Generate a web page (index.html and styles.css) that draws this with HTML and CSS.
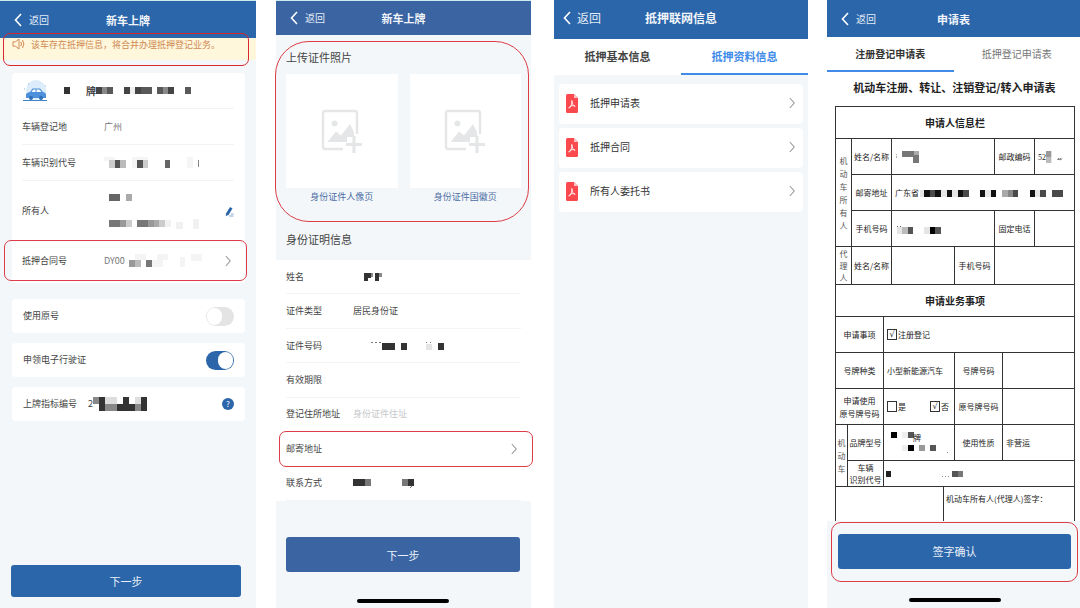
FILE: index.html
```html
<!DOCTYPE html>
<html lang="zh-CN">
<head>
<meta charset="utf-8">
<meta name="viewport" content="width=device-width, initial-scale=1">
<title>新车上牌</title>
<link rel="stylesheet" href="styles.css">
</head>
<body>
<svg class="defs" aria-hidden="true">
  <symbol id="back" viewBox="0 0 8 14"><path d="M7 1 1.5 7 7 13" fill="none" stroke="currentColor" stroke-width="1.6"/></symbol>
  <symbol id="next" viewBox="0 0 6 12"><path d="M.8 1 5.2 6 .8 11" fill="none" stroke="currentColor" stroke-width="1.1"/></symbol>
  <symbol id="photo" viewBox="0 0 42 44">
    <path d="M22 40H4Q2 40 2 38V4Q2 2 4 2H34Q36 2 36 4V25" fill="none" stroke="currentColor" stroke-width="2.400"/>
    <circle cx="13.500" cy="14.500" r="3" fill="currentColor"/>
    <path d="M6.500 33 15 22.500 20 26.500 29 15 33 23V28H26V33Z" fill="currentColor"/>
    <path d="M33 27V44M25 35.500H41" stroke="currentColor" stroke-width="3.200"/>
  </symbol>
  <symbol id="pdf" viewBox="0 0 12 19">
    <path d="M1.500 0H8L12 4V17.500Q12 19 10.500 19H1.500Q0 19 0 17.500V1.500Q0 0 1.500 0Z" fill="#fb4a4e"/>
    <path d="M8 0V4H12Z" fill="#ffc4c5"/>
    <path d="M5.800 6.500C6.500 9.500 5 12.500 3.200 14.200C2.600 14.300 3 12.700 5 12C7 11.300 9 11.500 9.200 12.200C8.700 13.100 6.100 11 5.800 6.500Z" fill="none" stroke="#fff" stroke-width=".9"/>
  </symbol>
</svg>
<div class="board">

<section class="phone phone-plate">
  <header class="bar">
    <button class="back"><svg class="back-icon"><use href="#back"/></svg>返回</button>
    <h1>新车上牌</h1>
  </header>
  <div class="notice">
    <svg class="speaker" viewBox="0 0 13 12"><path d="M1 3.800H3.500L7 1V11L3.500 8.200H1Z M8.800 3.800Q10.300 6 8.800 8.200 M10.500 2Q13.200 6 10.500 10" fill="none" stroke="currentColor"/></svg>
    <p>该车存在抵押信息，将合并办理抵押登记业务。</p>
    <span class="mark mark-notice"></span>
  </div>
  <main class="plate-body">
    <div class="card info">
      <div class="row vehicle">
        <svg class="car" viewBox="0 0 26 22"><circle cx="14" cy="10" r="10" fill="#dcecfb"/><path d="M1 20.500H25" stroke="#3f83c9"/><path d="M4 14Q5 12.500 8 12L10.500 8.500H18L21 12Q23.500 12.500 24 14V18H4Z" fill="#4c8fda"/><path d="M9.500 12 11.300 9.500H13.500V12ZM14.500 9.500H17.300L19.500 12H14.500Z" fill="#fff"/><circle cx="9" cy="18" r="2" fill="#2f6fb5"/><circle cx="19" cy="18" r="2" fill="#2f6fb5"/><path d="M2 9H3M23 6H24M6 4H7" stroke="#8bb8e6"/></svg>
        <svg class="mosaic plate-dot" viewBox="0 0 18 21"><path fill="#333" d="M0 0h18v21h-18z"/></svg>
        <b>牌</b>
        <svg class="mosaic plate-code" viewBox="291 0 285 21"><path fill="#444" d="M291 0h18v21h-18zM375 0h17v21h-17zM408 0h18v21h-18zM508 0h17v21h-17z"/><path fill="#888" d="M309 0h16v21h-16zM491 0h17v21h-17z"/><path fill="#595959" d="M325 0h17v21h-17zM426 0h32v21h-32zM474 0h17v21h-17zM558 0h18v21h-18z"/><path fill="#eee" d="M392 0h16v21h-16z"/></svg>
      </div>
      <div class="row"><span class="label">车辆登记地</span><span class="soft">广州</span></div>
      <div class="row"><span class="label">车辆识别代号</span>
        <svg class="mosaic vin" viewBox="309 0 288 33"><path fill="#f5f5f5" d="M309 0h32v12h-32zM392 0h48v33h-48zM558 0h18v33h-18z"/><path fill="#ccc" d="M325 10h16v22h-16zM425 10h16v22h-16z"/><path fill="#555" d="M341 10h17v22h-17zM408 10h17v22h-17z"/><path fill="#bbb" d="M358 10h17v22h-17z"/><path fill="#666" d="M491 10h17v22h-17z"/><path fill="#888" d="M591 8h3v22h-3z"/></svg></div>
      <div class="row owner"><span class="label">所有人</span>
        <svg class="mosaic owner-lines" viewBox="309 0 285 105"><path fill="#666" d="M325 0h33v21h-33z"/><path fill="#aaa" d="M375 0h17v21h-17zM458 78h17v21h-17z"/><path fill="#777" d="M325 78h33v21h-33zM408 78h33v21h-33z"/><path fill="#999" d="M358 78h17v21h-17zM441 78h17v21h-17z"/><path fill="#ccc" d="M375 78h17v21h-17zM475 78h17v21h-17z"/><path fill="#f1f1f1" d="M492 78h17v21h-17zM525 85h20v20h-20zM575 75h19v30h-19z"/></svg>
        <svg class="edit" viewBox="0 0 9 11"><path d="M1 7.500 5 1 7.500 2.500 3.500 9 .8 10Z" fill="#2d65ab"/><path d="M4 10H8.500M6 8H8.500" stroke="#87a9d0"/></svg></div>
      <div class="row contract"><span class="label">抵押合同号</span><span class="soft">DY00</span>
        <svg class="mosaic contract-code" viewBox="384 0 225 42"><path fill="#f4f4f4" d="M408 0h34v18h-34zM458 18h34v22h-34zM475 0h33v18h-33zM542 10h16v30h-16zM575 0h33v21h-33z"/><path fill="#999" d="M391 18h17v21h-17z"/><path fill="#bbb" d="M408 18h17v21h-17z"/><path fill="#777" d="M441 18h17v21h-17z"/></svg>
        <svg class="next"><use href="#next"/></svg>
        <span class="mark mark-contract"></span></div>
    </div>
    <label class="card option"><span>使用原号</span><input class="switch" type="checkbox"></label>
    <label class="card option"><span>申领电子行驶证</span><input class="switch" type="checkbox" checked></label>
    <div class="card option"><span>上牌指标编号</span><span class="quota">2<svg class="mosaic quota-code" viewBox="279 0 162 42"><path fill="#888" d="M279 0h18v20h-18zM315 20h35v22h-35zM404 20h20v22h-20z"/><path fill="#333" d="M297 0h18v42h-18zM369 0h18v20h-18zM351 20h53v22h-53zM424 0h17v42h-17z"/><path fill="#ddd" d="M315 0h36v20h-36zM404 0h20v20h-20z"/></svg></span><button class="help" aria-label="帮助">?</button></div>
  </main>
  <footer class="foot foot-plate"><button class="primary">下一步</button></footer>
</section>

<section class="phone phone-identity">
  <header class="bar">
    <button class="back"><svg class="back-icon"><use href="#back"/></svg>返回</button>
    <h1>新车上牌</h1>
  </header>
  <div class="upload">
    <h2>上传证件照片</h2>
    <div class="tiles">
      <button class="tile"><span class="drop"><svg class="photo"><use href="#photo"/></svg></span>身份证件人像页</button>
      <button class="tile"><span class="drop"><svg class="photo"><use href="#photo"/></svg></span>身份证件国徽页</button>
    </div>
    <span class="mark mark-upload"></span>
  </div>
  <h2 class="section">身份证明信息</h2>
  <div class="fields">
    <div class="field"><span class="label">姓名</span><svg class="mosaic name-code" viewBox="252 0 87 24"><path fill="#333" d="M286 0h12v24h-12zM298 0h8v14h-8zM318 0h11v24h-11z"/><path fill="#888" d="M306 0h5v12h-5zM329 0h9v12h-9z"/></svg></div>
    <div class="field"><span class="label">证件类型</span><span>居民身份证</span></div>
    <div class="field"><span class="label">证件号码</span><svg class="mosaic id-code" viewBox="252 0 273 24"><path fill="#333" d="M340 3h38v21h-38zM396 3h18v21h-18zM507 3h18v21h-18z"/><path fill="#777" d="M306 0h5v3h-5zM318 0h5v3h-5zM330 0h7v3h-7zM471 0h4v3h-4zM483 0h4v3h-4z"/><path fill="#e5e5e5" d="M470 6h18v17h-18z"/></svg></div>
    <div class="field"><span class="label">有效期限</span></div>
    <div class="field"><label class="label" for="home">登记住所地址</label><input id="home" class="entry" type="text" placeholder="身份证件住址"></div>
    <div class="field"><span class="label">邮寄地址</span><svg class="next"><use href="#next"/></svg><span class="mark mark-post"></span></div>
    <div class="field"><span class="label">联系方式</span><svg class="mosaic phone-code" viewBox="249 0 183 27"><path fill="#333" d="M249 0h35v21h-35zM414 0h18v21h-18z"/><path fill="#777" d="M284 0h18v21h-18zM396 0h18v21h-18zM417 24l9-3v4l-6 2z"/></svg></div>
  </div>
  <footer class="foot foot-identity"><button class="primary">下一步</button><span class="home-bar"></span></footer>
</section>

<section class="phone phone-files">
  <header class="bar">
    <button class="back"><svg class="back-icon"><use href="#back"/></svg>返回</button>
    <h1>抵押联网信息</h1>
  </header>
  <nav class="tabs"><button class="tab">抵押基本信息</button><button class="tab active">抵押资料信息</button></nav>
  <main class="files">
    <a class="card file" href="#"><svg class="pdf"><use href="#pdf"/></svg><span>抵押申请表</span><svg class="next"><use href="#next"/></svg></a>
    <a class="card file" href="#"><svg class="pdf"><use href="#pdf"/></svg><span>抵押合同</span><svg class="next"><use href="#next"/></svg></a>
    <a class="card file" href="#"><svg class="pdf"><use href="#pdf"/></svg><span>所有人委托书</span><svg class="next"><use href="#next"/></svg></a>
  </main>
</section>

<section class="phone phone-form">
  <header class="bar">
    <button class="back"><svg class="back-icon"><use href="#back"/></svg>返回</button>
    <h1>申请表</h1>
  </header>
  <nav class="tabs"><button class="tab active">注册登记申请表</button><button class="tab">抵押登记申请表</button></nav>
  <main class="sheet">
    <h2>机动车注册、转让、注销登记/转入申请表</h2>
    <table>
      <colgroup><col class="c12"><col class="c4"><col class="c32"><col class="c8"><col class="c52"><col class="c11"><col class="c40"><col class="c8"><col class="c32"><col class="c40"></colgroup>
      <tr class="title"><th colspan="10">申请人信息栏</th></tr>
      <tr><th class="side" colspan="2" rowspan="3">机<br>动<br>车<br>所<br>有<br>人</th><th colspan="2">姓名/名称</th><td colspan="3"><svg class="mosaic form-name" viewBox="216 0 75 36"><path fill="#777" d="M237 0h36v18h-36zM271 0h17v36h-17z"/><path fill="#aaa" d="M273 0h15v12h-15zM219 8h3v4h-3zM219 16h3v4h-3z"/></svg></td><th colspan="2">邮政编码</th><td><span class="serif">52</span><svg class="zip-code" viewBox="669 0 51 36"><path fill="#999" d="M669 0h16v18h-16z"/><path fill="#bbb" d="M669 18h16v18h-16z"/><path d="M703 27l4-5v5l5-5v5l6-5" fill="none" stroke="#444" stroke-width="2"/></svg></td></tr>
      <tr><th colspan="2">邮寄地址</th><td colspan="6">广东省<svg class="mosaic form-address" viewBox="288 0 432 21"><path fill="#111" d="M304 0h17v21h-17zM337 0h17v21h-17zM371 0h16v21h-16zM404 0h16v21h-16zM471 0h16v21h-16zM504 0h16v21h-16zM620 0h16v21h-16z"/><path fill="#4a4a4a" d="M321 0h16v21h-16zM420 0h17v21h-17zM570 0h16v21h-16zM652 0h17v21h-17zM686 0h34v21h-34z"/><path fill="#aaa" d="M537 0h17v21h-17z"/><path fill="#888" d="M554 0h16v21h-16z"/><path fill="#e6e6e6" d="M290 0h14v21h-14zM354 0h17v21h-17zM387 0h17v21h-17zM487 0h17v21h-17zM636 0h16v21h-16z"/></svg></td></tr>
      <tr><th colspan="2">手机号码</th><td colspan="3"><svg class="mosaic form-mobile" viewBox="216 0 138 24"><path fill="#e5e5e5" d="M221 3h17v21h-17zM304 3h16v21h-16z"/><path fill="#bbb" d="M238 3h16v21h-16z"/><path fill="#555" d="M254 3h17v21h-17zM337 3h17v21h-17zM221 0h4v2h-4zM231 0h4v2h-4z"/><path fill="#000" d="M320 3h17v21h-17z"/></svg></td><th colspan="2">固定电话</th><td></td></tr>
      <tr class="agent"><th class="side" colspan="2">代<br>理<br>人</th><th colspan="2">姓名/名称</th><td colspan="2"></td><th>手机号码</th><td colspan="3"></td></tr>
      <tr class="title"><th colspan="10">申请业务事项</th></tr>
      <tr><th colspan="3">申请事项</th><td colspan="7"><label class="check"><input type="checkbox" checked>注册登记</label></td></tr>
      <tr><th colspan="3">号牌种类</th><td colspan="3">小型新能源汽车</td><th colspan="2">号牌号码</th><td colspan="2"></td></tr>
      <tr><th colspan="3">申请使用<br>原号牌号码</th><td colspan="3"><div class="choices"><label class="check"><input type="checkbox">是</label><label class="check"><input type="checkbox" checked>否</label></div></td><th colspan="2">原号牌号码</th><td colspan="2"></td></tr>
      <tr><th class="side" rowspan="2">机<br>动<br>车</th><th colspan="2">品牌型号</th><td colspan="3"><div class="brand"><svg class="mosaic brand-code" viewBox="192 0 186 66"><path fill="#000" d="M204 0h18v18h-18zM255 39h18v18h-18z"/><path fill="#555" d="M255 0h17v18h-17zM321 39h17v18h-17z"/><path fill="#999" d="M288 39h17v18h-17z"/><path fill="#eee" d="M237 0h18v18h-18zM238 39h17v18h-17z"/><path fill="#888" d="M372 60h3v3h-3z"/></svg><span>牌</span></div></td><th colspan="2">使用性质</th><td colspan="2">非营运</td></tr>
      <tr class="vin-row"><th colspan="2">车辆<br>识别代号</th><td class="flush" colspan="7"><svg class="mosaic form-vin" viewBox="186 0 237 21"><path fill="#222" d="M189 0h16v19h-16z"/><path fill="#555" d="M387 0h17v19h-17z"/><path fill="#777" d="M404 0h17v19h-17z"/><path fill="#888" d="M356 16h3v3h-3zM366 16h3v3h-3zM376 16h3v3h-3z"/></svg></td></tr>
      <tr class="sign"><td colspan="5"></td><td class="flush" colspan="5">机动车所有人(代理人)签字：</td></tr>
    </table>
  </main>
  <footer class="foot foot-form"><div class="confirm"><button class="primary">签字确认</button><span class="mark mark-confirm"></span></div><span class="home-bar"></span></footer>
</section>

</div>
</body>
</html>
```
FILE: styles.css
```css
* { box-sizing: border-box; }

body {
  margin: 0;
  background: #fff;
  color: #444;
  font: 9px/14px "Noto Sans CJK SC", "Noto Sans", sans-serif;
}

h1, h2, p { margin: 0; font-weight: 400; }

button, input {
  margin: 0;
  padding: 0;
  border: 0;
  background: none;
  color: inherit;
  font: inherit;
}

svg { display: block; flex: none; }
.defs { position: absolute; width: 0; height: 0; }
.mosaic { shape-rendering: crispEdges; }

.board {
  display: grid;
  grid-template-columns: 256fr 20fr 255fr 23fr 254fr 19fr 253fr;
  min-height: 100vh;
}

.phone {
  display: flex;
  flex-direction: column;
  min-width: 0;
  background: #f3f7f9;
}
.phone-plate { grid-column: 1; }
.phone-identity { grid-column: 3; }
.phone-files { grid-column: 5; }
.phone-form { grid-column: 7; }

/* Title bar */
.bar {
  display: grid;
  grid-template-columns: 1fr auto 1fr;
  align-items: center;
  height: 38px;
  padding: 0 14px;
  background: #2c66aa;
  color: #f2f6fb;
}
.phone-plate .bar, .phone-identity .bar { border-top: 1px solid #cdeaec; }
.phone-identity .bar { height: 35px; background: #3b64a3; }
.phone-files .bar { height: 39px; padding: 0 9px 3px; }
.phone-files .bar h1, .phone-files .back { font-size: 12px; }
.bar h1 { font-size: 11px; font-weight: 700; }
.back { display: flex; align-items: center; gap: 7px; font-size: 10px; color: #e3ecf6; }
.phone-files .back { gap: 6px; }
.back-icon { width: 8px; height: 14px; color: #fff; }
.phone-files .back-icon { height: 18px; }

.mark {
  position: absolute;
  border: 1px solid #dc3d46;
  border-radius: 7px;
  pointer-events: none;
}

.card { background: #fff; border-radius: 4px; }
.next { width: 6px; height: 12px; margin-left: auto; color: #999; }
.primary {
  width: 100%;
  height: 35px;
  border-radius: 3px;
  background: #2c66aa;
  color: #e8f0f8;
  font-size: 11px;
}
.foot { display: flex; flex-direction: column; margin-top: auto; }
.home-bar { align-self: center; width: 92px; height: 4px; border-radius: 2px; background: #000; }

/* Plate application */
.notice {
  position: relative;
  display: flex;
  gap: 6px;
  height: 22px;
  padding-left: 12px;
  background: #fff7dc;
  color: #d08a54;
}
.speaker { width: 13px; height: 12px; }
.mark-notice { inset: -5px 7px -6px 3px; border-color: #d8262f; }
.plate-body { display: flex; flex-direction: column; gap: 10px; padding: 13px 11px 0 12px; }
.info { padding: 0 11px 2px 10px; margin-bottom: 6px; }
.row {
  display: flex;
  align-items: center;
  height: 36px;
  border-bottom: 1px solid #f2f3f4;
}
.row .label { width: 82px; }
.soft { color: #777; }
.vehicle b { margin-left: 16px; font-size: 10px; font-weight: 700; }
.car { width: 26px; height: 22px; }
.plate-dot { width: 6px; height: 7px; margin-left: 16px; }
.plate-code { width: 95px; height: 7px; }
.vin { width: 96px; height: 11px; }
.row.owner { height: 60px; border: 0; }
.owner-lines { width: 95px; height: 35px; }
.edit { width: 9px; height: 11px; margin-left: auto; }
.row.contract { position: relative; height: 40px; border: 0; }
.contract-code { width: 75px; height: 14px; margin-left: 2px; }
.row .next { margin-right: 3px; }
.mark-contract { inset: -1px -13px 0 -18px; }
.option {
  display: flex;
  align-items: center;
  justify-content: space-between;
  height: 34px;
  padding: 0 11px;
}
.switch {
  appearance: none;
  display: flex;
  width: 28px;
  height: 19px;
  padding: 1px;
  border-radius: 10px;
  background: #e4e4e4;
}
.switch::before { content: ""; width: 15px; border-radius: 8px; background: #fff; }
.switch:checked { justify-content: flex-end; background: #2c66aa; }
.quota { display: flex; align-items: center; margin: 0 auto 0 11px; }
.quota-code { width: 54px; height: 14px; }
.help { width: 12px; height: 12px; border-radius: 50%; background: #2c66aa; color: #fff; font-size: 8px; line-height: 12px; }
.foot-plate { padding: 0 15px 11px 11px; }
.foot-plate .primary { height: 32px; }

/* Identity details */
.upload { position: relative; height: 190px; padding: 14px 10px 0; }
.upload h2, .section { font-size: 11px; line-height: 16px; }
.tiles { display: grid; grid-template-columns: 1fr 1fr; gap: 12px; margin-top: 9px; }
.tile { color: #4c6da5; }
.drop { display: flex; justify-content: center; align-items: center; height: 114px; margin-bottom: 2px; background: #fff; }
.photo { width: 42px; height: 44px; color: #e5e6e7; }
.mark-upload { inset: 6px 2px 3px -1px; border-radius: 34px; }
.section { height: 35px; padding: 6px 10px; }
.fields { display: grid; grid-auto-rows: 1fr; min-height: 241px; padding: 0 10px; background: #fff; }
.field { position: relative; display: flex; align-items: center; border-bottom: 1px solid #f3f4f5; }
.field .label { width: 67px; }
.field .next { margin-right: 4px; }
.entry { flex: 1; min-width: 0; }
.entry::placeholder { color: #c6c8ca; opacity: 1; }
.name-code { width: 29px; height: 8px; }
.id-code { width: 91px; height: 8px; }
.phone-code { width: 61px; height: 9px; }
.mark-post { inset: -1px -12px -1px -7px; }
.foot-identity { gap: 27px; padding: 0 11px 5px 10px; }
.foot-identity .primary { background: #3b64a3; }

/* Tabs */
.tabs { display: grid; grid-template-columns: 1fr 1fr; height: 36px; background: #fff; }
.tab { border-bottom: 2px solid transparent; font-size: 11px; font-weight: 700; color: #444; }
.tab.active { border-color: #418be8; }
.phone-files .tab.active { color: #418be8; }

/* Mortgage files */
.files { display: flex; flex-direction: column; gap: 4px; padding: 9px 5px; }
.file {
  display: flex;
  align-items: center;
  gap: 12px;
  height: 40px;
  padding: 0 8px 2px 7px;
  color: #333;
  font-size: 10px;
  text-decoration: none;
}
.pdf { width: 12px; height: 19px; }

/* Registration form */
.phone-form .bar { height: 37px; }
.phone-form .tabs { height: 35px; }
.phone-form .tab { font-size: 10px; font-weight: 400; color: #777; }
.phone-form .tab.active { color: #333; font-weight: 700; }
.sheet { padding: 0 6px 0 8px; background: #fff; }
.sheet h2 { padding: 7px 0 11px; font-size: 11px; line-height: 16px; font-weight: 700; color: #222; text-align: center; white-space: nowrap; }
table { width: 100%; table-layout: fixed; border-collapse: collapse; color: #222; font-size: 8px; line-height: 13px; }
.c4 { width: 4px; }
.c8 { width: 8px; }
.c11 { width: 11px; }
.c12 { width: 12px; }
.c32 { width: 32px; }
.c40 { width: 40px; }
.c52 { width: 52px; }
tr { height: 36px; }
th, td { padding: 0; border: 1px solid #333; }
th { font-weight: 400; text-align: center; white-space: nowrap; }
td { padding-left: 3px; text-align: left; white-space: nowrap; }
td svg { display: inline-block; vertical-align: middle; }
td.flush { padding-left: 1px; }
.title { height: 32px; }
.title th { font-size: 10px; font-weight: 700; }
.side { color: #555; }
.agent { height: 38px; }
.agent .side { line-height: 12px; }
.vin-row { height: 26px; line-height: 12px; }
.sign { height: 34px; }
.sign td { padding: 5px 0 0 2px; border-bottom: 0; vertical-align: top; }
.serif { font-family: "Liberation Serif", serif; }
.check { display: flex; align-items: center; gap: 1px; }
.check input { appearance: none; width: 10px; height: 11px; border: 1px solid #333; font: 8px/9px "DejaVu Sans", sans-serif; text-align: center; }
.check input:checked::before { content: "√"; }
.choices { display: flex; justify-content: space-between; padding-right: 5px; }
.form-name { width: 25px; height: 12px; }
.zip-code { width: 17px; height: 12px; }
.form-address { width: 144px; height: 7px; }
.form-mobile { width: 46px; height: 8px; }
.form-vin { width: 79px; height: 7px; }
.brand { display: grid; }
.brand > * { grid-area: 1 / 1; }
.brand span { padding-left: 26px; line-height: 12px; }
.brand-code { width: 62px; height: 22px; }
.foot-form { gap: 29px; margin: 0; padding: 13px 9px 6px 11px; }
.confirm { position: relative; }
.mark-confirm { inset: -12px -7px -13px -7px; border-radius: 10px; }
```
